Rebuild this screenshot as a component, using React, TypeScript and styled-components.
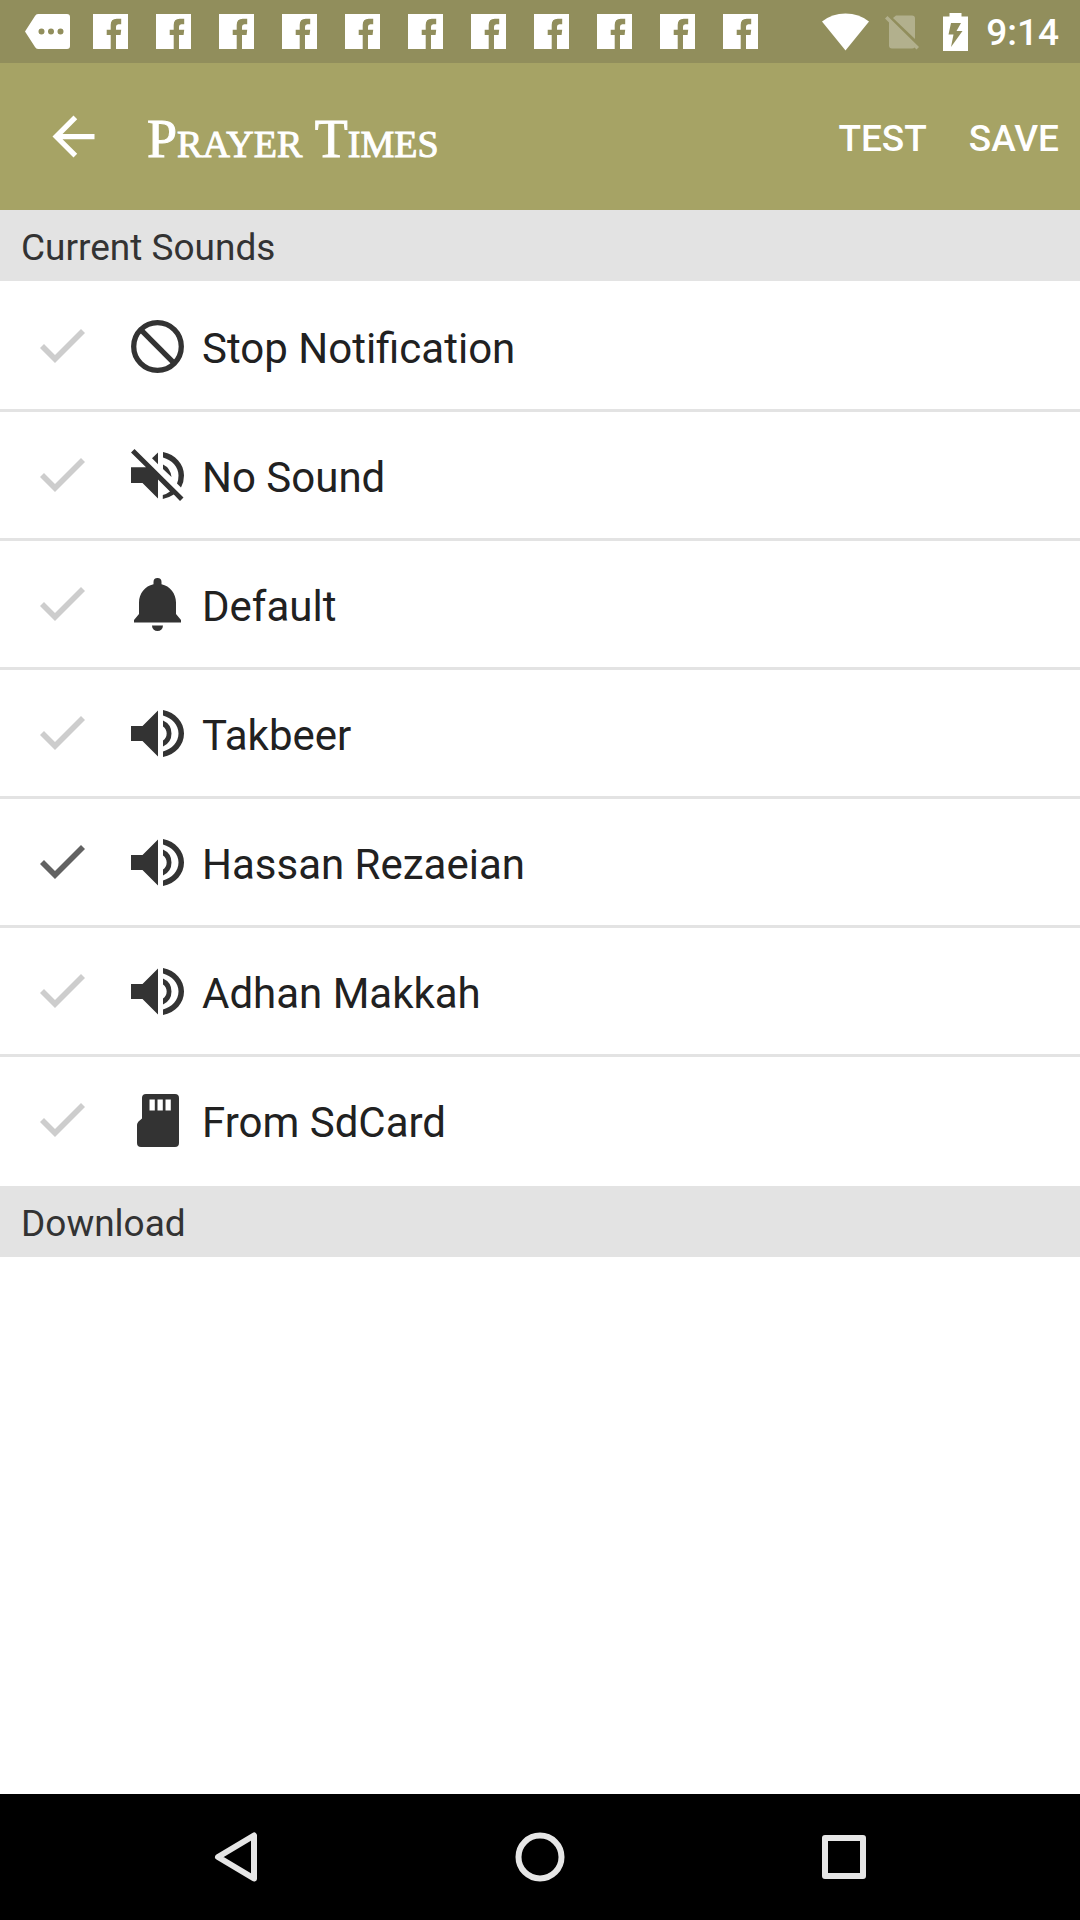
import React, { useState } from "react";
import styled, { createGlobalStyle } from "styled-components";

const GlobalStyle = createGlobalStyle`
  * { box-sizing: border-box; }
  body {
    margin: 0;
    background: #fff;
    font-family: Roboto, "Liberation Sans", sans-serif;
  }
`;

const Screen = styled.div`
  display: flex;
  flex-direction: column;
  min-height: 100vh;
  background: #fff;
`;

const StatusBar = styled.div`
  display: flex;
  justify-content: space-between;
  height: 63px;
  padding: 0 21px 0 16px;
  background: #918e5c;
  color: #fff;
`;

const Notifications = styled.div`
  display: flex;
`;

const NotificationSlot = styled.span`
  display: flex;
  align-items: center;
  justify-content: center;
  width: 63px;
`;

const SystemIcons = styled.div`
  display: flex;
  align-items: center;
  gap: 16px;
`;

const Clock = styled.time`
  padding-top: 3px;
  font-size: 37px;
  font-weight: 500;
  line-height: 44px;
`;

const AppBar = styled.header`
  display: flex;
  align-items: center;
  height: 147px;
  padding: 0 21px 0 42px;
  background: #a6a365;
  color: #fff;
`;

const BarButton = styled.button`
  display: flex;
  margin: 0;
  padding: 0;
  border: 0;
  background: none;
  color: inherit;
  font-family: inherit;
  font-size: 37px;
  font-weight: 500;
  line-height: 44px;
  cursor: pointer;
`;

const Title = styled.h1`
  flex: 1;
  margin: 0;
  padding: 4px 0 0 42px;
  font-family: "Liberation Serif", serif;
  font-size: 54px;
  font-weight: 400;
  font-variant: small-caps;
  line-height: 60px;
  -webkit-text-stroke: 1px currentColor;
`;

const Actions = styled.div`
  display: flex;
  gap: 42px;
  padding-top: 4px;
`;

const SectionTitle = styled.h2`
  margin: 0;
  padding: 16px 21px 11px;
  background: #e3e3e3;
  color: #333;
  font-size: 37px;
  font-weight: 400;
  line-height: 44px;
`;

const SoundList = styled.ul`
  margin: 0;
  padding: 2px 0 3px;
  list-style: none;
`;

const SoundItem = styled.li`
  & + & {
    border-top: 3px solid #e3e3e3;
  }
`;

const SoundLabel = styled.label`
  display: flex;
  align-items: center;
  height: 126px;
  padding: 0 40px;
  cursor: pointer;
`;

const CheckMark = styled.input`
  appearance: none;
  flex: none;
  width: 45px;
  height: 34px;
  margin: 0 46px 0 0;
  background: #cdcdcd;
  clip-path: polygon(0 19px, 4px 15px, 15px 26px, 41px 0, 45px 4px, 15px 34px);
  cursor: pointer;

  &:checked {
    background: #626262;
  }
`;

const SoundIcon = styled.svg`
  flex: none;
  width: 53px;
  height: 53px;
  fill: #333;
`;

const SoundName = styled.span`
  padding: 6px 0 0 18px;
  color: #212121;
  font-size: 42px;
  line-height: 50px;
`;

const NavBar = styled.nav`
  display: flex;
  height: 126px;
  margin-top: auto;
  padding: 0 84px;
  background: #000;
`;

const NavButton = styled.button`
  display: flex;
  flex: 1;
  align-items: center;
  justify-content: center;
  padding: 0;
  border: 0;
  background: none;
  cursor: pointer;
`;

const NavGlyph = styled.svg`
  width: 50px;
  height: 50px;
  fill: none;
  stroke: #e6e6e6;
  stroke-width: 6;
  stroke-linejoin: round;
`;

const MoreIcon = () => (
  <svg width="45" height="35" viewBox="0 0 45 35" fill="currentColor">
    <path
      fillRule="evenodd"
      d="M13 0h29q3 0 3 3v29q0 3-3 3H13q-2 0-3-2L0 17.500 10 2q1-2 3-2zM16.500 14.500a3 3 0 1 0 0 6 3 3 0 0 0 0-6zm9.500 0a3 3 0 1 0 0 6 3 3 0 0 0 0-6zm9.500 0a3 3 0 1 0 0 6 3 3 0 0 0 0-6z"
    />
  </svg>
);

const FacebookIcon = () => (
  <svg width="35" height="35" viewBox="0 0 35 35" fill="currentColor">
    <path d="M0 0h35v35H23V21h4.600l.6-5.300H23v-3q0-2.500 2.400-2.500h2.800V4.700h-4.500q-6 0-6 6.200v4.800h-4V21h4v14H0z" />
  </svg>
);

const WifiIcon = () => (
  <svg width="47" height="38" viewBox="0 0 47 38" fill="currentColor">
    <path d="M23.500 37.500 0 8.500Q10 .5 23.500.5T47 8.500z" />
  </svg>
);

const NoSimIcon = () => (
  <svg width="42" height="38" viewBox="0 0 42 38" fill="currentColor" opacity="0.3">
    <path d="M11 2.500h16q3 0 3 3V26L8 5z" />
    <path d="M0 5.500 2.500 3l31.500 31-2.500 2.500L29.500 34.500Q29 35.500 27 35.500H7q-3 0-3-3V9.400z" />
  </svg>
);

const BatteryIcon = () => (
  <svg width="27" height="38" viewBox="0 0 27 38" fill="currentColor">
    <path
      fillRule="evenodd"
      d="M6.500 0h12v3.500H25V38H0V3.500h6.500zM8 10 5.500 21.500h5L8 34l11.500-16h-6L18 10z"
    />
  </svg>
);

const BackArrow = () => (
  <svg width="63" height="63" viewBox="0 0 24 24" fill="currentColor">
    <path d="M20 11H7.830l5.590-5.590L12 4l-8 8 8 8 1.410-1.410L7.830 13H20v-2z" />
  </svg>
);

const BlockGlyph = () => (
  <g fill="none" stroke="#333" strokeWidth="5.300">
    <circle cx="26.500" cy="26.500" r="23.800" />
    <path d="m9.700 9.700 33.600 33.600" />
  </g>
);

const SpeakerGlyph = () => (
  <g transform="translate(0 3)">
    <path d="M0 16h11.500L27 .5v46L11.500 31H0z" />
    <path d="M32 0C44.500 2.500 53 12 53 23.500S44.500 44.500 32 47v-5.500C41 39 47.500 32 47.500 23.500S41 8 32 5.500z" />
    <path d="M32 10.500a14.200 14.200 0 0 1 0 26v-6a8.500 8.500 0 0 0 0-14z" />
  </g>
);

const MutedGlyph = () => (
  <g>
    <path d="M3.500 0 0 3.500 15 18.300H0V34h11.500L27 49.500V30.500l12 12q-3.300 2.500-7.200 3.500v4q6-1.200 11-4.500l6.200 6.500 3.500-3.500z" />
    <path d="M27 3.500 21 9.300l6 6z" />
    <path d="M32 3C44.500 5.500 53 15 53 26.500Q53 33 50 38.500l-4-4Q47.500 31 47.500 26.500C47.500 18 41 11 32 8.500z" />
    <path d="M32 15.500q7.500 3.500 8.500 12.500L32 20z" />
  </g>
);

const BellGlyph = () => (
  <g>
    <path d="M26.500 0a4 4 0 0 1 4 4v2.200C39 8 45 15.500 45 24.500V36l5 6v2.500H3V42l5-6V24.500C8 15.500 14 8 22.500 6.200V4a4 4 0 0 1 4-4z" />
    <path d="M21 47.500h11a5.500 5.500 0 0 1-11 0z" />
  </g>
);

const SdGlyph = () => (
  <path
    fillRule="evenodd"
    d="M15 0h29q4 0 4 4v45q0 4-4 4H10q-4 0-4-4V31q0-2 1.500-3.500l3.500-3V4q0-4 4-4zM18.500 5.500v11h5.300v-11zm8 0v11h5.300v-11zm8 0v11h5.300v-11z"
  />
);

const sounds = [
  { name: "Stop Notification", Glyph: BlockGlyph },
  { name: "No Sound", Glyph: MutedGlyph },
  { name: "Default", Glyph: BellGlyph },
  { name: "Takbeer", Glyph: SpeakerGlyph },
  { name: "Hassan Rezaeian", Glyph: SpeakerGlyph },
  { name: "Adhan Makkah", Glyph: SpeakerGlyph },
  { name: "From SdCard", Glyph: SdGlyph },
];

export default function App() {
  const [selected, setSelected] = useState("Hassan Rezaeian");

  return (
    <Screen>
      <GlobalStyle />
      <StatusBar>
        <Notifications>
          <NotificationSlot>
            <MoreIcon />
          </NotificationSlot>
          {Array.from({ length: 11 }, (_, i) => (
            <NotificationSlot key={i}>
              <FacebookIcon />
            </NotificationSlot>
          ))}
        </Notifications>
        <SystemIcons>
          <WifiIcon />
          <NoSimIcon />
          <BatteryIcon />
          <Clock>9:14</Clock>
        </SystemIcons>
      </StatusBar>

      <AppBar>
        <BarButton type="button" aria-label="Back">
          <BackArrow />
        </BarButton>
        <Title>Prayer Times</Title>
        <Actions>
          <BarButton type="button">TEST</BarButton>
          <BarButton type="button">SAVE</BarButton>
        </Actions>
      </AppBar>

      <main>
        <SectionTitle>Current Sounds</SectionTitle>
        <SoundList>
          {sounds.map(({ name, Glyph }) => (
            <SoundItem key={name}>
              <SoundLabel>
                <CheckMark
                  type="radio"
                  name="sound"
                  value={name}
                  checked={selected === name}
                  onChange={() => setSelected(name)}
                />
                <SoundIcon viewBox="0 0 53 53" aria-hidden="true">
                  <Glyph />
                </SoundIcon>
                <SoundName>{name}</SoundName>
              </SoundLabel>
            </SoundItem>
          ))}
        </SoundList>
        <SectionTitle>Download</SectionTitle>
      </main>

      <NavBar>
        <NavButton type="button" aria-label="Back">
          <NavGlyph viewBox="0 0 50 50">
            <path d="M43 3.500v43L7 25z" />
          </NavGlyph>
        </NavButton>
        <NavButton type="button" aria-label="Home">
          <NavGlyph viewBox="0 0 50 50">
            <circle cx="25" cy="25" r="21.500" />
          </NavGlyph>
        </NavButton>
        <NavButton type="button" aria-label="Recent apps">
          <NavGlyph viewBox="0 0 50 50">
            <rect x="6" y="6" width="38" height="38" />
          </NavGlyph>
        </NavButton>
      </NavBar>
    </Screen>
  );
}
